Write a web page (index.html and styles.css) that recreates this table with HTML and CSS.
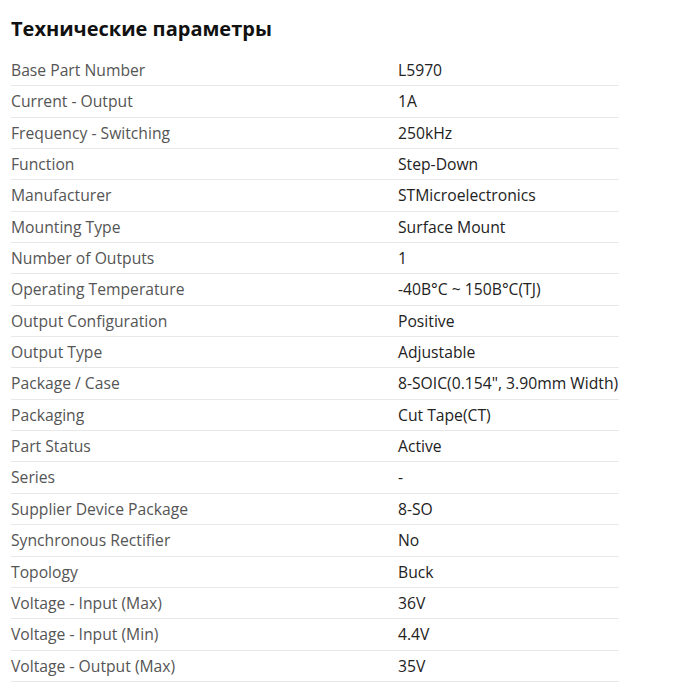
FILE: index.html
```html
<!DOCTYPE html>
<html lang="ru">
<head>
<meta charset="utf-8">
<link rel="stylesheet" href="styles.css">
</head>
<body>
<div class="specs">
  <h2 class="specs-title">Технические параметры</h2>
  <table class="specs-table">
    <tr><td class="k">Base Part Number</td><td class="v">L5970</td></tr>
    <tr><td class="k">Current - Output</td><td class="v">1A</td></tr>
    <tr><td class="k">Frequency - Switching</td><td class="v">250kHz</td></tr>
    <tr><td class="k">Function</td><td class="v">Step-Down</td></tr>
    <tr><td class="k">Manufacturer</td><td class="v">STMicroelectronics</td></tr>
    <tr><td class="k">Mounting Type</td><td class="v">Surface Mount</td></tr>
    <tr><td class="k">Number of Outputs</td><td class="v">1</td></tr>
    <tr><td class="k">Operating Temperature</td><td class="v">-40B°C ~ 150B°C(TJ)</td></tr>
    <tr><td class="k">Output Configuration</td><td class="v">Positive</td></tr>
    <tr><td class="k">Output Type</td><td class="v">Adjustable</td></tr>
    <tr><td class="k">Package / Case</td><td class="v">8-SOIC(0.154", 3.90mm Width)</td></tr>
    <tr><td class="k">Packaging</td><td class="v">Cut Tape(CT)</td></tr>
    <tr><td class="k">Part Status</td><td class="v">Active</td></tr>
    <tr><td class="k">Series</td><td class="v">-</td></tr>
    <tr><td class="k">Supplier Device Package</td><td class="v">8-SO</td></tr>
    <tr><td class="k">Synchronous Rectifier</td><td class="v">No</td></tr>
    <tr><td class="k">Topology</td><td class="v">Buck</td></tr>
    <tr><td class="k">Voltage - Input (Max)</td><td class="v">36V</td></tr>
    <tr><td class="k">Voltage - Input (Min)</td><td class="v">4.4V</td></tr>
    <tr><td class="k">Voltage - Output (Max)</td><td class="v">35V</td></tr>
  </table>
</div>
</body>
</html>
```

FILE: styles.css
```css
html, body {
  margin: 0;
  padding: 0;
  background: #fff;
}
body {
  font-family: "Open Sans", "Liberation Sans", sans-serif;
}
.specs {
  padding: 15px 0 0 11px;
}
.specs-title {
  margin: 0 0 12px 0;
  font-size: 20px;
  line-height: 28px;
  font-weight: 700;
  color: #111;
}
.specs-table {
  border-collapse: collapse;
  width: 608px;
  font-size: 15.7px;
}
.specs-table td {
  padding: 5px 0;
  line-height: 20.35px;
  border-bottom: 1px solid #e8e8e8;
  vertical-align: middle;
  white-space: nowrap;
}
.specs-table .k {
  width: 387px;
  color: #555;
}
.specs-table .v {
  color: #222;
}
```
